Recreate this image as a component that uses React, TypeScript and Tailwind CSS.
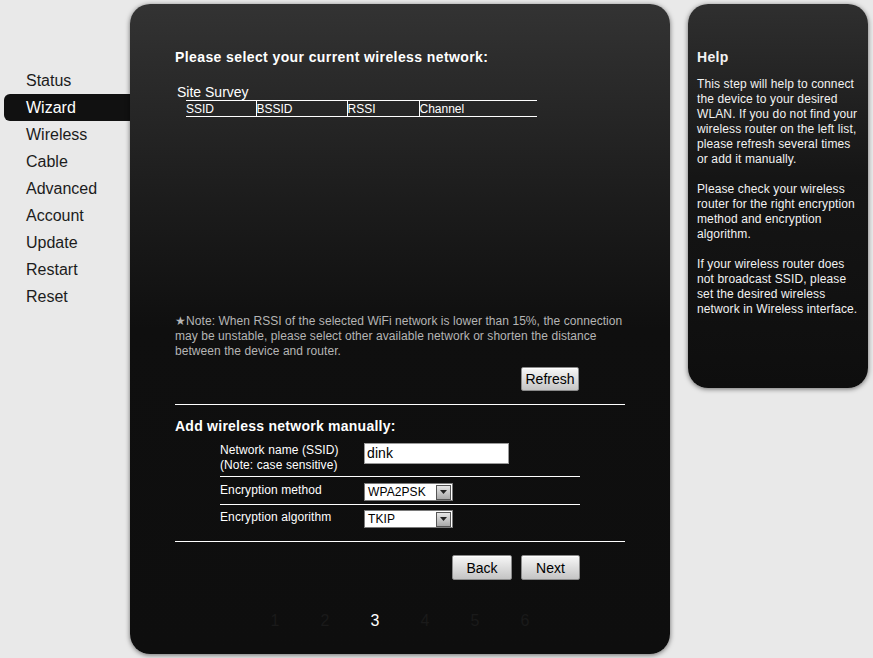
import React from "react";

const navItems = ["Status", "Wizard", "Wireless", "Cable", "Advanced", "Account", "Update", "Restart", "Reset"];

const helpParas = [
  [
    "This step will help to connect",
    "the device to your desired",
    "WLAN. If you do not find your",
    "wireless router on the left list,",
    "please refresh several times",
    "or add it manually.",
  ],
  ["Please check your wireless", "router for the right encryption", "method and encryption", "algorithm."],
  ["If your wireless router does", "not broadcast SSID, please", "set the desired wireless", "network in Wireless interface."],
];

const GrayButton: React.FC<{ label: string; className?: string }> = ({ label, className = "" }) => (
  <button
    className={`flex items-center justify-center rounded-[2px] border border-[#8a8a8a] bg-gradient-to-b from-[#f7f7f7] to-[#c4c4c4] text-[14px] leading-4 text-black shadow-[inset_0_1px_0_#fff] ${className}`}
  >
    {label}
  </button>
);

const FakeSelect: React.FC<{ value: string }> = ({ value }) => (
  <div className="flex h-[18px] w-[89px] items-center border border-[#7a7a7a] bg-white">
    <span className="flex-1 pl-[3px] text-[12px] leading-4 text-black">{value}</span>
    <span className="mr-px flex h-[15px] w-[15px] items-center justify-center border border-[#555] bg-gradient-to-b from-[#e6e6e6] to-[#a9a9a9]">
      <svg width="7" height="4" viewBox="0 0 7 4">
        <path d="M0 0h7L3.5 4z" fill="#222" />
      </svg>
    </span>
  </div>
);

export default function App() {
  return (
    <div className="min-h-[658px] w-full bg-[#e9e9e9] pt-1 font-['Liberation_Sans',Arial,sans-serif]">
      <div className="flex items-start">
        {/* left menu */}
        <nav className="w-[130px] shrink-0 pt-[63px]">
          {navItems.map((item) => (
            <div
              key={item}
              className={`ml-1 flex h-[27px] items-center pl-[22px] text-[16px] ${
                item === "Wizard" ? "rounded-l-[6px] bg-[#111] text-white" : "text-[#1c1c1c]"
              }`}
            >
              {item}
            </div>
          ))}
        </nav>

        {/* main panel */}
        <main className="relative z-10 flex h-[650px] w-[540px] shrink-0 flex-col rounded-[20px] bg-[linear-gradient(to_bottom,#333_0%,#1c1c1c_30%,#0f0f0f_50%,#0e0e0e_100%)] px-[45px] pt-[45px] text-white shadow-[0_1px_5px_rgba(0,0,0,0.55)]">
          <h2 className="text-[14px] font-bold leading-4 tracking-[0.4px]">Please select your current wireless network:</h2>

          <div className="ml-[2px] mt-[19px] text-[14px] leading-4">Site Survey</div>
          <table className="ml-[11px] w-[351px] border-collapse text-left text-[12px] leading-[14px]">
            <thead>
              <tr className="h-[16px] border-y border-white">
                <th className="w-[70px] p-0 font-normal">SSID</th>
                <th className="w-[91px] border-l border-white p-0 font-normal">BSSID</th>
                <th className="w-[72px] border-l border-white p-0 font-normal">RSSI</th>
                <th className="border-l border-white p-0 font-normal">Channel</th>
              </tr>
            </thead>
          </table>

          <p className="mt-[197px] whitespace-nowrap text-[12px] leading-[15px] tracking-[0.06px] text-[#b5b5b5]">
            ★Note: When RSSI of the selected WiFi network is lower than 15%, the connection
            <br />
            may be unstable, please select other available network or shorten the distance
            <br />
            between the device and router.
          </p>

          <div className="mt-2 flex justify-end pr-[46px]">
            <GrayButton label="Refresh" className="h-6 w-[58px]" />
          </div>

          <div className="mt-[13px] h-px bg-white" />

          <h2 className="mt-[13px] text-[14px] font-bold leading-4 tracking-[0.25px]">Add wireless network manually:</h2>

          <div className="ml-[45px] mt-[9px] w-[360px] text-[12px] leading-[15px] tracking-[0.1px]">
            <div className="flex h-[34px] border-b border-white">
              <div className="w-[144px]">
                Network name (SSID)
                <br />
                (Note: case sensitive)
              </div>
              <div className="flex h-[21px] w-[145px] items-center border border-[#9a9a9a] bg-white pl-[2px] text-[14px] text-black">
                dink
              </div>
            </div>
            <div className="flex h-[28px] border-b border-white pt-[6px]">
              <div className="w-[144px]">Encryption method</div>
              <FakeSelect value="WPA2PSK" />
            </div>
            <div className="flex h-[26px] pt-[5px]">
              <div className="w-[144px]">Encryption algorithm</div>
              <FakeSelect value="TKIP" />
            </div>
          </div>

          <div className="mt-[10px] h-px bg-white" />

          <div className="mt-[13px] flex justify-end gap-[9px] pr-[45px]">
            <GrayButton label="Back" className="h-[25px] w-[60px]" />
            <GrayButton label="Next" className="h-[25px] w-[59px]" />
          </div>

          <div className="mt-[31px] flex justify-center text-[16px] leading-5">
            {[1, 2, 3, 4, 5, 6].map((n) => (
              <span key={n} className={`w-[50px] text-center ${n === 3 ? "text-white" : "text-[#1a1a1a]"}`}>
                {n}
              </span>
            ))}
          </div>
        </main>

        {/* help panel */}
        <aside className="ml-[18px] h-[384px] w-[180px] shrink-0 rounded-[20px] bg-[linear-gradient(to_bottom,#2f2f2f_0%,#151515_45%,#0e0e0e_100%)] px-[9px] pt-[45px] text-[#f2f2f2] shadow-[0_1px_5px_rgba(0,0,0,0.55)]">
          <h3 className="text-[14px] font-bold leading-4 tracking-[0.3px]">Help</h3>
          <div className="mt-3 space-y-[15px] whitespace-nowrap text-[12px] leading-[15px] tracking-[0.12px]">
            {helpParas.map((para, i) => (
              <p key={i}>
                {para.map((line, j) => (
                  <React.Fragment key={j}>
                    {line}
                    {j < para.length - 1 && <br />}
                  </React.Fragment>
                ))}
              </p>
            ))}
          </div>
        </aside>
      </div>
    </div>
  );
}
